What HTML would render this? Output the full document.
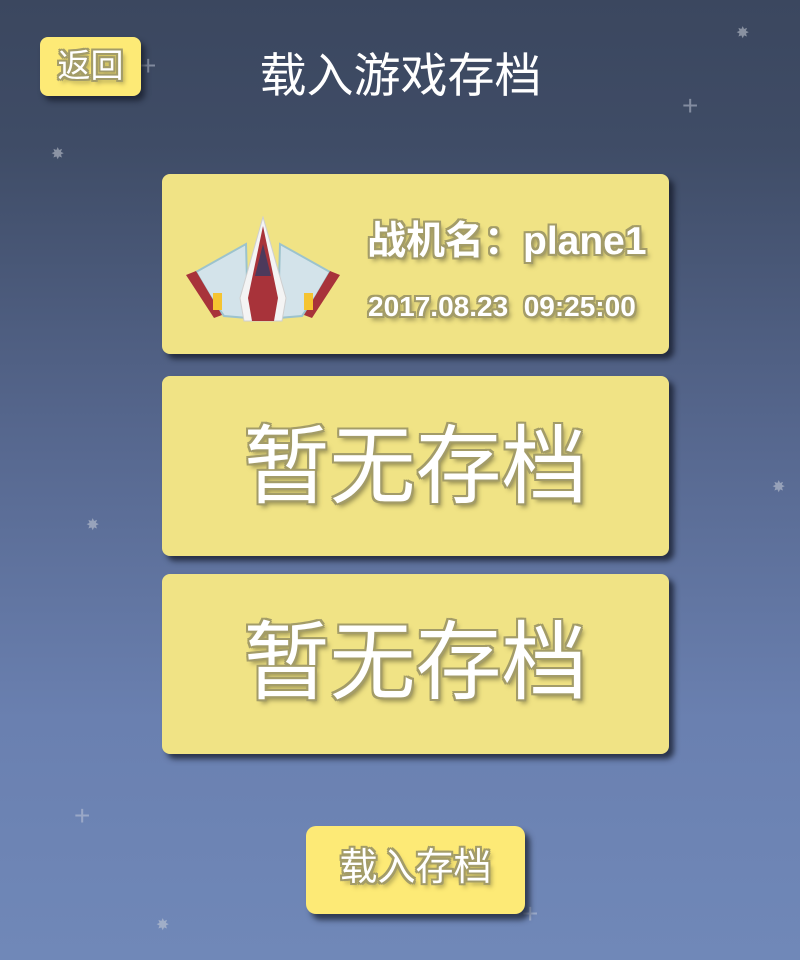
<!DOCTYPE html>
<html><head><meta charset="utf-8">
<style>
html,body{margin:0;padding:0}
body{width:800px;height:960px;overflow:hidden;position:relative;
background:linear-gradient(180deg,#3b475f 0%,#3f4c66 15%,#56678e 45%,#6a80b0 75%,#7088b8 100%);
font-family:"Liberation Sans","Noto Sans CJK SC",sans-serif}
.o{color:#fff;text-shadow:-2px -2px 0 #a39c68,2px -2px 0 #a39c68,-2px 2px 0 #a39c68,2px 2px 0 #a39c68,0 2px 0 #a39c68,0 -2px 0 #a39c68,2px 0 0 #a39c68,-2px 0 0 #a39c68,3px 4px 5px rgba(90,85,50,.6)}
.card{position:absolute;left:162px;width:507px;background:#f0e385;border-radius:8px;box-shadow:5px 5px 6px rgba(20,25,40,.75)}
.big{position:absolute;left:0;right:0;text-align:center;font-size:86px;line-height:1}
.star{position:absolute;color:rgba(200,205,215,.55);font-size:16px;line-height:1}
.plus{position:absolute;color:rgba(200,205,220,.5);font-size:28px;line-height:1;font-weight:100}
</style></head><body>
<div class="star" style="left:736px;top:26px">✸</div>
<div class="star" style="left:51px;top:147px">✸</div>
<div class="star" style="left:86px;top:518px">✸</div>
<div class="star" style="left:772px;top:480px">✸</div>
<div class="star" style="left:156px;top:918px">✸</div>
<div class="plus" style="left:140px;top:52px">+</div>
<div class="plus" style="left:682px;top:92px">+</div>
<div class="plus" style="left:74px;top:802px">+</div>
<div class="plus" style="left:522px;top:900px">+</div>

<div style="position:absolute;left:40px;top:37px;width:101px;height:59px;background:#fdea76;border-radius:8px;box-shadow:4px 5px 6px rgba(20,25,40,.7)"></div>
<div class="o" style="position:absolute;left:40px;top:44px;width:101px;text-align:center;font-size:33px;line-height:44px">返回</div>
<div style="position:absolute;left:0;right:0;top:46px;text-align:center;font-size:47px;line-height:60px;color:#fff;padding-left:1px">载入游戏存档</div>

<div class="card" style="top:174px;height:180px">
<svg style="position:absolute;left:22px;top:42px" width="160" height="110" viewBox="0 0 160 110">
<polygon points="12,56 62,28 64,102 40,100 26,80" fill="#d3e3ea" stroke="#9cc3cd" stroke-width="2"/>
<polygon points="146,56 96,28 94,102 118,100 132,80" fill="#d3e3ea" stroke="#9cc3cd" stroke-width="2"/>
<polygon points="2,59 12,55 38,99 30,102" fill="#a8333a"/>
<polygon points="156,59 146,55 120,99 128,102" fill="#a8333a"/>
<rect x="29" y="77" width="9" height="17" fill="#f5c431"/>
<rect x="120" y="77" width="9" height="17" fill="#f5c431"/>
<polygon points="79,1 102,82 98,105 60,105 56,82" fill="#f4f4f4" stroke="#cfcfcf" stroke-width="1"/>
<polygon points="79,10 94,82 90,105 68,105 64,82" fill="#a8333a"/>
<polygon points="79,28 87,60 71,60" fill="#4d3a5c"/>
</svg>
<div class="o" style="position:absolute;left:205px;top:44px;font-size:39px;line-height:48px;font-weight:bold;white-space:nowrap">战机名：plane1</div>
<div class="o" style="position:absolute;left:206px;top:115px;font-size:28px;line-height:36px;font-weight:bold;white-space:nowrap">2017.08.23&nbsp;&nbsp;09:25:00</div>
</div>

<div class="card" style="top:376px;height:180px"><div class="big o" style="top:48px">暂无存档</div></div>
<div class="card" style="top:574px;height:180px"><div class="big o" style="top:46px">暂无存档</div></div>

<div style="position:absolute;left:306px;top:826px;width:219px;height:88px;background:#fdea76;border-radius:10px;box-shadow:5px 6px 6px rgba(20,25,40,.7)"></div>
<div class="o" style="position:absolute;left:306px;top:842px;width:219px;text-align:center;font-size:38px;line-height:52px">载入存档</div>
</body></html>
